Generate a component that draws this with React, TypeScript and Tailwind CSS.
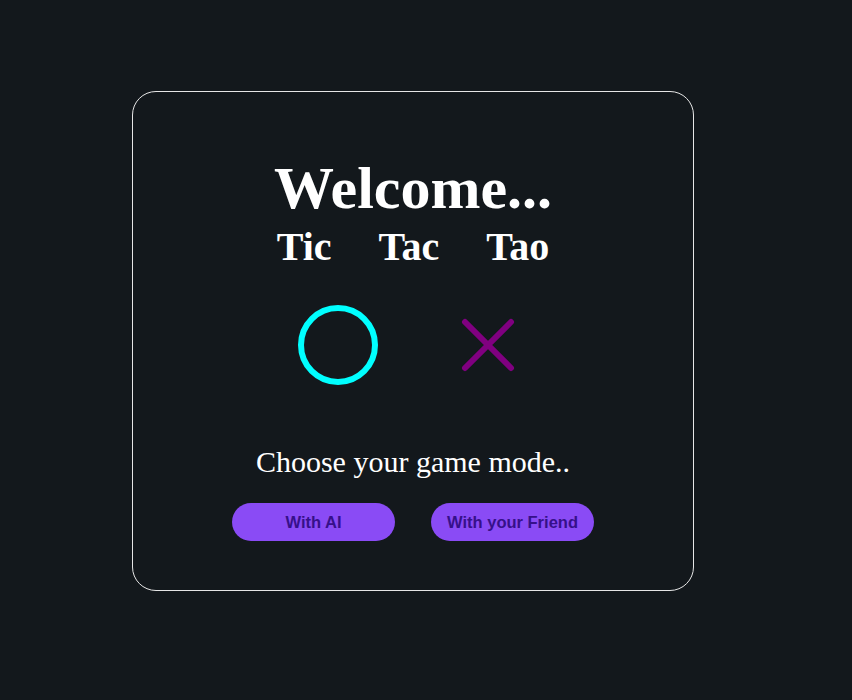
export default function App() {
  return (
    <div className="min-h-[700px] w-full bg-[#13181c] pt-[91px] pl-[132px]">
      <div className="flex h-[500px] w-[562px] flex-col items-center rounded-[24px] border border-[#e6e6e6] pt-[66px] font-['Liberation_Serif',serif] text-white">
        <h1 className="text-[60px] font-bold leading-[60px]">Welcome...</h1>
        <div className="mt-[9px] flex gap-[47px] text-[40px] font-bold leading-[40px]">
          <span>Tic</span>
          <span>Tac</span>
          <span>Tao</span>
        </div>

        <div className="mt-[36px] flex gap-[66px]">
          <svg width="84" height="84" viewBox="0 0 84 84" aria-hidden="true">
            <circle cx="42" cy="42" r="37" fill="none" stroke="#00ffff" strokeWidth="6" />
          </svg>
          <svg width="84" height="84" viewBox="0 0 84 84" aria-hidden="true">
            <path
              d="M19 19 L65 65 M65 19 L19 65"
              fill="none"
              stroke="#800080"
              strokeWidth="6"
              strokeLinecap="round"
            />
          </svg>
        </div>

        <p className="mt-[60px] text-[30px] leading-[30px]">Choose your game mode..</p>

        <div className="mt-[26px] flex gap-[36px] font-['Liberation_Sans',sans-serif]">
          <button
            type="button"
            className="h-[38px] w-[163px] rounded-full bg-[#8a4bf5] text-[16.5px] font-bold text-[#36108a]"
          >
            With AI
          </button>
          <button
            type="button"
            className="h-[38px] w-[163px] rounded-full bg-[#8a4bf5] text-[16.5px] font-bold text-[#36108a]"
          >
            With your Friend
          </button>
        </div>
      </div>
    </div>
  );
}
